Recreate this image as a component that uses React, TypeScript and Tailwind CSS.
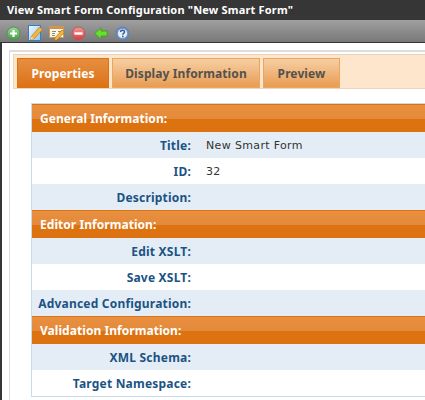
import React from 'react';

const labelFont = "font-['Noto_Sans',sans-serif]";

const Row = ({ label, value, alt }: { label: string; value?: string; alt?: boolean }) => (
  <div className={`flex h-[26px] items-center pt-[1px] ${alt ? 'bg-white' : 'bg-[#e4edf5]'}`}>
    <div className={`w-[159px] shrink-0 whitespace-nowrap text-right text-[12px] font-bold tracking-[0.2px] text-[#1b5384] ${labelFont}`}>
      {label}
    </div>
    <div className="pl-[15px] pt-[1px] font-['DejaVu_Sans',sans-serif] text-[11px] tracking-[0.35px] text-[#333]">{value}</div>
  </div>
);

const Section = ({ title }: { title: string }) => (
  <div className="relative h-[28px] shrink-0 border-t border-[#dd7210] bg-[#dd7210]">
    <div className="h-[14px] bg-gradient-to-b from-[#e89040] to-[#e4893a]" />
    <div className={`absolute top-0 left-[8px] flex h-full items-center text-[12px] font-bold tracking-[0.05px] text-white ${labelFont}`}>
      {title}
    </div>
  </div>
);

const Tab = ({ label, active, width }: { label: string; active?: boolean; width: string }) => (
  <div
    className={`flex h-[30px] items-center justify-center border pt-[1px] text-[12px] font-bold tracking-[0.1px] ${labelFont} ${width} ${
      active
        ? 'border-[#dd7210] bg-gradient-to-b from-[#e68f40] to-[#dd7210] text-white'
        : 'border-[#eba55f] bg-gradient-to-b from-[#f6cfa3] to-[#e89c50] text-[#54524f]'
    }`}
  >
    {label}
  </div>
);

const Toolbar = () => (
  <div className="flex h-[22px] shrink-0 items-center bg-gradient-to-b from-[#a0a0a0] to-[#787878] pl-[6px] pt-[4px]">
    <svg width="15" height="15" viewBox="0 0 15 15">
      <defs>
        <linearGradient id="grn" x1="0" y1="0" x2="0" y2="1">
          <stop offset="0" stopColor="#9ed99e" />
          <stop offset="1" stopColor="#3f9e3f" />
        </linearGradient>
      </defs>
      <circle cx="7.5" cy="7.5" r="6.5" fill="url(#grn)" stroke="#5a8f5a" />
      <path d="M7.5 4v7M4 7.5h7" stroke="#fff" strokeWidth="2.2" />
    </svg>
    <svg width="15" height="16" viewBox="0 0 15 16" className="ml-[7px]">
      <defs>
        <linearGradient id="doc" x1="0" y1="0" x2="1" y2="1">
          <stop offset="0" stopColor="#f5faff" />
          <stop offset="1" stopColor="#8fc4f2" />
        </linearGradient>
      </defs>
      <rect x="0.5" y="0.5" width="12" height="15" fill="url(#doc)" stroke="#2f7fd0" />
      <path d="M3 12 L11.5 2 L14.5 4.5 L6 14 L2.5 14.5 Z" fill="#f5b640" stroke="#b07a20" strokeWidth="0.7" />
      <path d="M3 12 L2.5 14.5 L6 14 Z" fill="#f8e3c0" />
    </svg>
    <svg width="16" height="16" viewBox="0 0 16 16" className="ml-[6px]">
      <rect x="0.5" y="1.5" width="14" height="11" fill="#fdf5e6" stroke="#c89a5a" />
      <rect x="1" y="2" width="13" height="2" fill="#d9903f" />
      <path d="M3 6.5h4M3 8.5h3M3 10.5h3M9 6.5h3" stroke="#888" />
      <path d="M6 13 L13 5 L15.5 7 L8 15 L5 15.5 Z" fill="#f5b640" stroke="#a8701a" strokeWidth="0.7" />
    </svg>
    <svg width="15" height="15" viewBox="0 0 15 15" className="ml-[6px]">
      <defs>
        <linearGradient id="red" x1="0" y1="0" x2="0" y2="1">
          <stop offset="0" stopColor="#f09a9a" />
          <stop offset="1" stopColor="#d63c3c" />
        </linearGradient>
      </defs>
      <circle cx="7.5" cy="7.5" r="6.5" fill="url(#red)" stroke="#b85a5a" />
      <path d="M3.5 7.5h8" stroke="#fff" strokeWidth="2.4" />
    </svg>
    <svg width="14" height="13" viewBox="0 0 14 13" className="ml-[8px]">
      <path d="M0.8 6.5 L7 0.8 V4 H13.2 V9 H7 V12.2 Z" fill="#66e02e" stroke="#3c9a18" strokeWidth="0.8" />
    </svg>
    <svg width="15" height="15" viewBox="0 0 15 15" className="ml-[7px]">
      <circle cx="7.5" cy="7.5" r="6.5" fill="#6f94c8" stroke="#5d80b4" />
      <circle cx="7.5" cy="7.5" r="4.6" fill="#e6edf8" />
      <path d="M5.6 6c0-2.3 3.9-2.3 3.9 0 0 1.4-1.8 1.3-1.8 2.7" fill="none" stroke="#3a5f98" strokeWidth="1.5" />
      <rect x="7" y="9.7" width="1.6" height="1.6" fill="#3a5f98" />
    </svg>
  </div>
);

const App = () => {
  return (
    <div className="flex h-[400px] w-[425px] flex-col overflow-hidden bg-white">
      <div className={`flex h-[20px] shrink-0 items-center bg-[#363636] pl-[7px] text-[11px] font-bold tracking-[0.18px] text-white ${labelFont}`}>
        View Smart Form Configuration "New Smart Form"
      </div>
      <Toolbar />
      <div className="h-[1px] shrink-0 bg-[#333]" />
      <div className="min-h-0 flex-1 border-l-2 border-[#363636] pl-[7px] pt-[7px]">
        <div className="h-full border-t-2 border-l border-[#ddd] pl-[3px] pt-[2px]">
          <div className="flex gap-[3px] border-y border-l border-[#ecd6bb] bg-[#fde6cc] pt-[3px] pl-[3px]">
            <Tab label="Properties" active width="w-[92px]" />
            <Tab label="Display Information" width="w-[148px]" />
            <Tab label="Preview" width="w-[77px]" />
          </div>
          <div className="mt-[14px] ml-[18px] border-y border-l border-[#c9dcea]">
            <Section title="General Information:" />
            <Row label="Title:" value="New Smart Form" />
            <Row label="ID:" value="32" alt />
            <Row label="Description:" />
            <Section title="Editor Information:" />
            <Row label="Edit XSLT:" />
            <Row label="Save XSLT:" alt />
            <Row label="Advanced Configuration:" />
            <Section title="Validation Information:" />
            <Row label="XML Schema:" />
            <Row label="Target Namespace:" alt />
          </div>
        </div>
      </div>
    </div>
  );
};

export default App;
